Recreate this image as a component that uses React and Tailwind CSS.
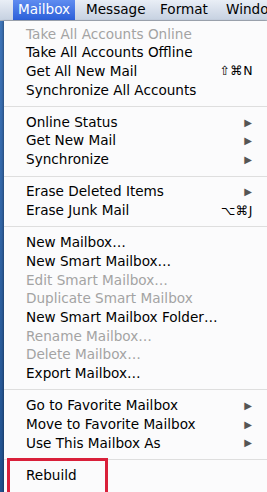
import React from "react";

const sections = [
  [
    { label: "Take All Accounts Online", disabled: true },
    { label: "Take All Accounts Offline" },
    { label: "Get All New Mail", shortcut: "⇧⌘N" },
    { label: "Synchronize All Accounts" },
  ],
  [
    { label: "Online Status", sub: true },
    { label: "Get New Mail", sub: true },
    { label: "Synchronize", sub: true },
  ],
  [
    { label: "Erase Deleted Items", sub: true },
    { label: "Erase Junk Mail", shortcut: "⌥⌘J" },
  ],
  [
    { label: "New Mailbox…" },
    { label: "New Smart Mailbox…" },
    { label: "Edit Smart Mailbox…", disabled: true },
    { label: "Duplicate Smart Mailbox", disabled: true },
    { label: "New Smart Mailbox Folder…" },
    { label: "Rename Mailbox…", disabled: true },
    { label: "Delete Mailbox…", disabled: true },
    { label: "Export Mailbox…" },
  ],
  [
    { label: "Go to Favorite Mailbox", sub: true },
    { label: "Move to Favorite Mailbox", sub: true },
    { label: "Use This Mailbox As", sub: true },
  ],
  [{ label: "Rebuild" }],
];

const MenuItem = ({ item }) => (
  <div
    className={`flex items-center h-[18.7px] pl-[22px] pr-[14px] ${
      item.disabled ? "text-[#a3a3a3]" : "text-black"
    }`}
  >
    <span className="flex-1 whitespace-nowrap">{item.label}</span>
    {item.shortcut && (
      <span className="text-[12.5px] tracking-[0.5px]">{item.shortcut}</span>
    )}
    {item.sub && <span className="text-[10px] text-[#555] mr-[1px]">▶</span>}
  </div>
);

export default function App() {
  return (
    <div
      className="relative w-[267px] h-[492px] overflow-hidden bg-[#2c5c9c] text-[13.6px] leading-none"
      style={{ fontFamily: '"DejaVu Sans", "Noto Sans", sans-serif' }}
    >
      <div className="flex items-stretch h-[21px] bg-gradient-to-b from-[#e9eef6] to-[#c6d1e1] border-b border-[#a9b1bd] text-[13.6px]">
        <div className="w-[13px] shrink-0" />
        <div className="flex items-center justify-center w-[62px] shrink-0 bg-gradient-to-b from-[#5f8cf0] to-[#2c5fd9] text-white">
          Mailbox
        </div>
        <div className="flex items-center w-[85px] shrink-0 pl-[11px] text-black">
          Message
        </div>
        <div className="flex items-center w-[66px] shrink-0 text-black">Format</div>
        <div className="flex items-center shrink-0 text-black whitespace-nowrap">
          Windo
        </div>
      </div>
      <div className="flex h-full">
        <div className="w-[4px] shrink-0 bg-gradient-to-b from-[#3e74b8] to-[#1f4f8c]" />
        <div className="flex-1 bg-[#fbfbfc] pt-[4px] shadow-[-1px_0_2px_rgba(0,0,0,0.3)]">
          {sections.map((section, i) => (
            <div key={i}>
              {i > 0 && (
                <div className="flex items-center h-[13.5px]">
                  <div className="w-full h-px bg-[#dedede]" />
                </div>
              )}
              {section.map((item) => (
                <MenuItem key={item.label} item={item} />
              ))}
            </div>
          ))}
        </div>
      </div>
      <div className="absolute left-[7px] top-[458px] w-[101px] h-[40px] border-[3px] border-[#d9203a]" />
    </div>
  );
}
